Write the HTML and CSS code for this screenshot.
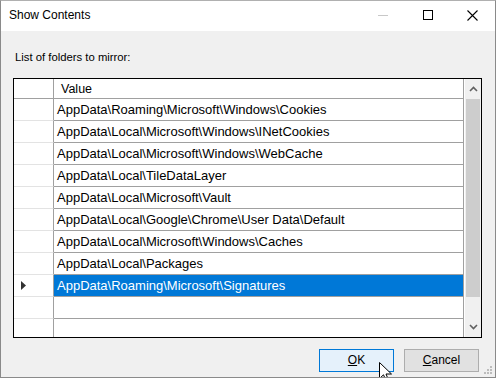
FILE: index.html
```html
<!DOCTYPE html>
<html>
<head>
<meta charset="utf-8">
<link rel="stylesheet" href="styles.css">
</head>
<body>
<div class="window">
  <div class="titlebar">
    <div class="title">Show Contents</div>
    <div class="caption-btns">
      <div class="cbtn min"><svg width="10" height="10" viewBox="0 0 10 10"><path d="M0 5.5H10" stroke="#c8c8c8" stroke-width="1"/></svg></div>
      <div class="cbtn"><svg width="10" height="10" viewBox="0 0 10 10"><rect x="0.5" y="0.5" width="9" height="9" fill="none" stroke="#000" stroke-width="1"/></svg></div>
      <div class="cbtn"><svg width="11" height="11" viewBox="0 0 11 11"><path d="M0.5 0.5L10.5 10.5M10.5 0.5L0.5 10.5" stroke="#000" stroke-width="1.1"/></svg></div>
    </div>
  </div>
  <div class="body">
    <div class="label">List of folders to mirror:</div>
    <div class="grid">
      <div class="cells">
        <div class="row head"><div class="rh"></div><div class="cell">Value</div></div>
        <div class="row"><div class="rh"></div><div class="cell">AppData\Roaming\Microsoft\Windows\Cookies</div></div>
        <div class="row"><div class="rh"></div><div class="cell">AppData\Local\Microsoft\Windows\INetCookies</div></div>
        <div class="row"><div class="rh"></div><div class="cell">AppData\Local\Microsoft\Windows\WebCache</div></div>
        <div class="row"><div class="rh"></div><div class="cell">AppData\Local\TileDataLayer</div></div>
        <div class="row"><div class="rh"></div><div class="cell">AppData\Local\Microsoft\Vault</div></div>
        <div class="row"><div class="rh"></div><div class="cell">AppData\Local\Google\Chrome\User Data\Default</div></div>
        <div class="row"><div class="rh"></div><div class="cell">AppData\Local\Microsoft\Windows\Caches</div></div>
        <div class="row"><div class="rh"></div><div class="cell">AppData\Local\Packages</div></div>
        <div class="row sel"><div class="rh"><svg width="5" height="9" viewBox="0 0 5 9"><path d="M0 0L5 4.5L0 9Z" fill="#333"/></svg></div><div class="cell">AppData\Roaming\Microsoft\Signatures</div></div>
        <div class="row"><div class="rh"></div><div class="cell"></div></div>
        <div class="row"><div class="rh"></div><div class="cell"></div></div>
      </div>
      <div class="vscroll">
        <div class="arrow"><svg width="9" height="6" viewBox="0 0 9 6"><path d="M1 5L4.5 1.5L8 5" fill="none" stroke="#606060" stroke-width="1.6"/></svg></div>
        <div class="track"><div class="thumb"></div></div>
        <div class="arrow"><svg width="9" height="6" viewBox="0 0 9 6"><path d="M1 1L4.5 4.5L8 1" fill="none" stroke="#606060" stroke-width="1.6"/></svg></div>
      </div>
    </div>
    <div class="buttons">
      <div class="btn default"><span class="u">O</span>K</div>
      <div class="btn"><span class="u">C</span>ancel</div>
    </div>
    <svg class="grip" width="9" height="9" viewBox="0 0 9 9">
      <rect x="6" y="0" width="2" height="2" fill="#bcbcbc"/>
      <rect x="3" y="3" width="2" height="2" fill="#bcbcbc"/><rect x="6" y="3" width="2" height="2" fill="#bcbcbc"/>
      <rect x="0" y="6" width="2" height="2" fill="#bcbcbc"/><rect x="3" y="6" width="2" height="2" fill="#bcbcbc"/><rect x="6" y="6" width="2" height="2" fill="#bcbcbc"/>
    </svg>
    <svg class="cursor" width="14" height="21" viewBox="0 0 14 21">
      <path d="M0.5 0.5V16.5L4.5 12.8L7.2 19.2L9.6 18.2L7 12H12.5Z" fill="#fff" stroke="#000" stroke-width="1" stroke-linejoin="round"/>
    </svg>
  </div>
</div>
</body>
</html>
```
FILE: styles.css
```css
html, body {
  margin: 0;
  padding: 0;
  background: #ffffff;
}
.window {
  width: 496px;
  height: 378px;
  box-sizing: border-box;
  border: 1px solid #8a8a8a;
  border-top-color: #b0b0b0;
  display: flex;
  flex-direction: column;
  font-family: "Liberation Sans", Arial, sans-serif;
  font-size: 12px;
  color: #000;
  overflow: hidden;
}
.titlebar {
  height: 30px;
  background: #fff;
  display: flex;
  align-items: center;
  justify-content: space-between;
}
.title {
  padding-left: 8px;
  font-size: 12px;
  padding-bottom: 2px;
}
.caption-btns {
  display: flex;
  height: 100%;
}
.cbtn {
  width: 45px;
  height: 100%;
  display: flex;
  align-items: center;
  justify-content: center;
  padding-bottom: 2px;
  box-sizing: border-box;
}
.body {
  flex: 1;
  background: #f0f0f0;
  position: relative;
  padding: 19px 0 0 12px;
  display: flex;
  flex-direction: column;
}
.label {
  height: 15px;
  line-height: 15px;
  padding-left: 2px;
  font-size: 11.3px;
  color: #000;
}
.grid {
  margin-top: 13px;
  width: 469px;
  height: 260px;
  box-sizing: border-box;
  border: 1px solid #000;
  background: #fff;
  display: flex;
  overflow: hidden;
}
.cells {
  width: 451px;
  display: flex;
  flex-direction: column;
  font-size: 13px;
}
.row {
  display: flex;
  height: 22px;
  flex: none;
}
.row.head {
  height: 20px;
}
.rh {
  width: 40px;
  flex: none;
  border-right: 1px solid #a0a0a0;
  border-bottom: 1px solid #e3e3e3;
  display: flex;
  align-items: center;
  padding-left: 7px;
  box-sizing: border-box;
}
.head .rh {
  border-bottom: 1px solid #a0a0a0;
}
.cell {
  flex: 1;
  border-right: 1px solid #a0a0a0;
  border-bottom: 1px solid #a0a0a0;
  padding-left: 3px;
  display: flex;
  align-items: center;
  white-space: nowrap;
  box-sizing: border-box;
}
.head .cell {
  padding-left: 7px;
  font-size: 12.5px;
}
.sel .cell {
  background: #0078d7;
  color: #fff;
}
.vscroll {
  width: 16px;
  margin-left: 1px;
  background: #f0f0f0;
  display: flex;
  flex-direction: column;
}
.arrow {
  height: 20px;
  flex: none;
  display: flex;
  align-items: center;
  justify-content: center;
}
.track {
  flex: 1;
  padding: 0 1px;
}
.thumb {
  height: 198px;
  background: #cdcdcd;
}
.buttons {
  display: flex;
  justify-content: flex-end;
  gap: 10px;
  margin-top: 11px;
  padding-right: 16px;
}
.btn {
  width: 75px;
  height: 23px;
  box-sizing: border-box;
  border: 1px solid #adadad;
  background: #e1e1e1;
  display: flex;
  align-items: center;
  justify-content: center;
  padding-bottom: 1px;
}
.btn.default {
  border-color: #0078d7;
  background: #e5f1fb;
}
.u {
  text-decoration: underline;
}
.grip {
  position: absolute;
  right: 2px;
  bottom: 2px;
}
.cursor {
  position: absolute;
  left: 378px;
  top: 331px;
}
```
